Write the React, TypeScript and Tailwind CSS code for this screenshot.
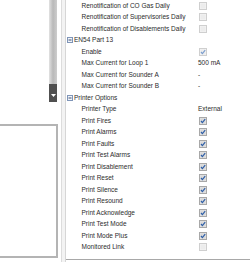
import React from "react";

type Row =
  | { kind: "group"; label: string }
  | { kind: "item"; label: string; value?: string; check?: "on" | "off" | "dimOn" | "dimOff" };

const rows: Row[] = [
  { kind: "item", label: "Renotification of CO Gas Daily", check: "dimOff" },
  { kind: "item", label: "Renotification of Supervisories Daily", check: "dimOff" },
  { kind: "item", label: "Renotification of Disablements Daily", check: "dimOff" },
  { kind: "group", label: "EN54 Part 13" },
  { kind: "item", label: "Enable", check: "dimOn" },
  { kind: "item", label: "Max Current for Loop 1", value: "500 mA" },
  { kind: "item", label: "Max Current for Sounder A", value: "-" },
  { kind: "item", label: "Max Current for Sounder B", value: "-" },
  { kind: "group", label: "Printer Options" },
  { kind: "item", label: "Printer Type", value: "External" },
  { kind: "item", label: "Print Fires", check: "on" },
  { kind: "item", label: "Print Alarms", check: "on" },
  { kind: "item", label: "Print Faults", check: "on" },
  { kind: "item", label: "Print Test Alarms", check: "on" },
  { kind: "item", label: "Print Disablement", check: "on" },
  { kind: "item", label: "Print Reset", check: "on" },
  { kind: "item", label: "Print Silence", check: "on" },
  { kind: "item", label: "Print Resound", check: "on" },
  { kind: "item", label: "Print Acknowledge", check: "on" },
  { kind: "item", label: "Print Test Mode", check: "on" },
  { kind: "item", label: "Print Mode Plus", check: "on" },
  { kind: "item", label: "Monitored Link", check: "dimOff" },
];

const CheckBox = ({ state }: { state: "on" | "off" | "dimOn" | "dimOff" }) => {
  const dim = state === "dimOn" || state === "dimOff";
  const checked = state === "on" || state === "dimOn";
  return (
    <svg width="8" height="8" viewBox="0 0 8 8">
      <rect x="0.5" y="0.5" width="7" height="7" fill={dim ? "#f4f4f4" : "#e4e4e4"} stroke={dim ? "#cfcfcf" : "#a8a8a8"} />
      <rect x="1.5" y="1.5" width="5" height="5" fill={dim ? "#ececec" : "#d8d8d8"} />
      {checked && (
        <path d="M2 4 L3.4 5.6 L6.2 2.2" fill="none" stroke={dim ? "#7d9fcf" : "#2f5fa8"} strokeWidth="1.2" />
      )}
    </svg>
  );
};

const MinusBox = () => (
  <svg width="6" height="6" viewBox="0 0 6 6">
    <rect x="0.5" y="0.5" width="5" height="5" fill="#f2f5fa" stroke="#7f95b8" />
    <path d="M1.5 3 H4.5" stroke="#3b4f73" strokeWidth="1" />
  </svg>
);

export default function App() {
  return (
    <div className="w-[250px] h-[262px] flex bg-white overflow-hidden text-[6.5px] text-[#2b2b2b] font-['Liberation_Sans',Arial,sans-serif]">
      {/* Left side */}
      <div className="w-[58px] flex flex-col">
        <div className="flex h-[102px]">
          <div className="w-[49px]" />
          <div className="w-[8px] flex flex-col">
            <div className="flex-1 bg-gradient-to-r from-[#e2e2e2] via-[#b9b9b9] to-[#cdcdcd]" />
            <div className="h-[18px] bg-[#505050] flex items-center justify-center pt-[4px]">
              <svg width="5" height="3" viewBox="0 0 5 3">
                <path d="M0 0 H5 L2.5 3 Z" fill="#ffffff" />
              </svg>
            </div>
          </div>
        </div>
        <div className="mt-[22px] h-[134px] border-t-2 border-r-2 border-b-2 border-[#b4b4b4]" />
      </div>

      {/* Splitter */}
      <div className="w-[8px] flex">
        <div className="w-[3px]" />
        <div className="w-[1px] bg-[#dcdcdc]" />
        <div className="w-[3px] bg-[#f3f3f3]" />
        <div className="w-[1px] bg-[#d6d6d6]" />
      </div>

      {/* Property grid */}
      <div className="flex-1 flex flex-col">
        <div className="h-[259px]">
          {rows.map((r, i) =>
            r.kind === "group" ? (
              <div key={i} className="h-[11.5px] flex items-center pl-[1px]">
                <MinusBox />
                <span className="ml-[1px] whitespace-nowrap">{r.label}</span>
              </div>
            ) : (
              <div key={i} className="h-[11.5px] flex items-center">
                <span className="w-[132px] pl-[15.5px] whitespace-nowrap overflow-hidden">{r.label}</span>
                <span className="flex items-center whitespace-nowrap">
                  {r.check ? <span className="ml-[1px] flex"><CheckBox state={r.check} /></span> : r.value}
                </span>
              </div>
            )
          )}
        </div>
        <div className="h-[1px] bg-[#a8a8a8]" />
      </div>
    </div>
  );
}
